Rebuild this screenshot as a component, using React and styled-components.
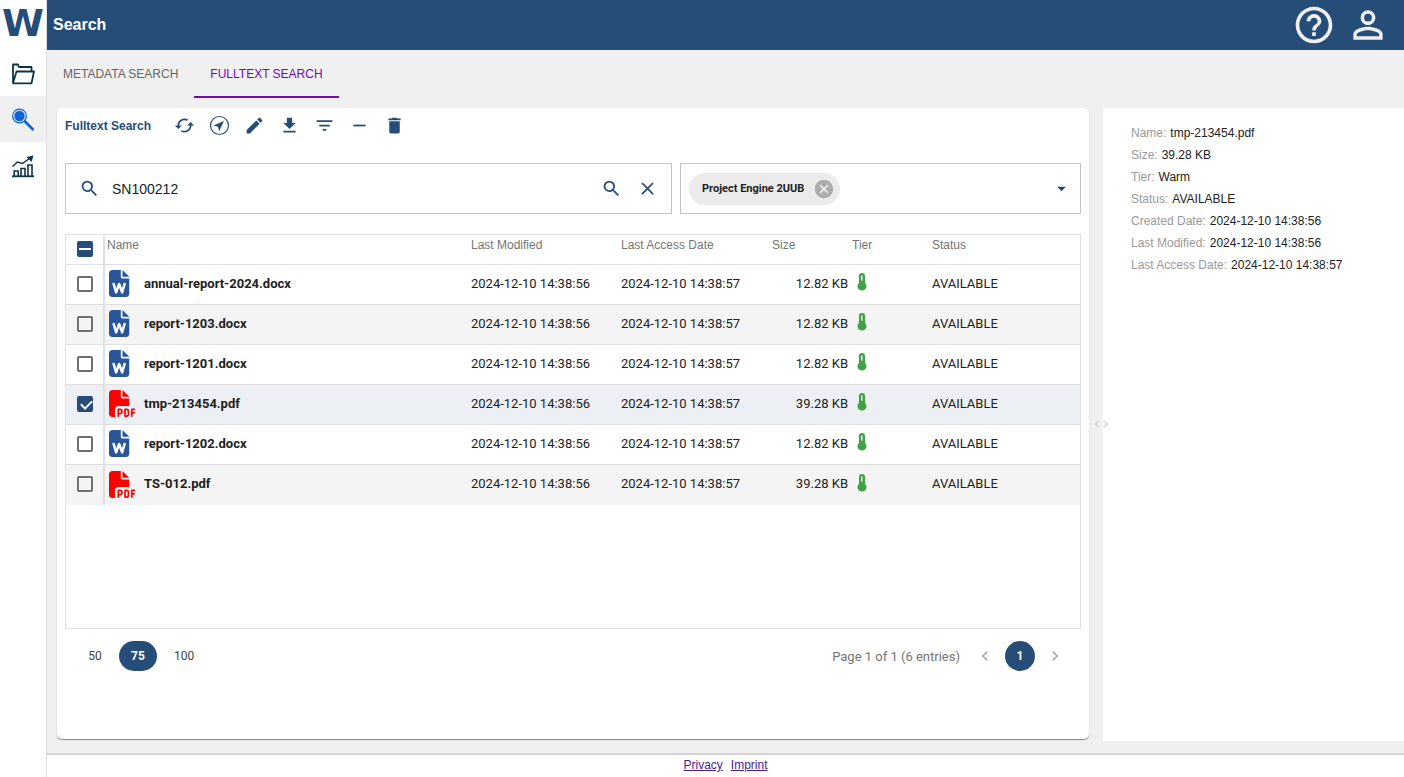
import React, { useState } from "react";
import styled, { createGlobalStyle } from "styled-components";
import {
  MdArrowDropDown,
  MdCached,
  MdCancel,
  MdChevronLeft,
  MdChevronRight,
  MdClose,
  MdDelete,
  MdEdit,
  MdFilterList,
  MdGetApp,
  MdHelpOutline,
  MdPersonOutline,
  MdRemove,
  MdSearch,
} from "react-icons/md";
import { FaFilePdf, FaFileWord } from "react-icons/fa6";

const colors = {
  primary: "#264d77",
  accent: "#7209b7",
  page: "#f0f0f0",
  line: "#e0e0e0",
  field: "#c4c4c4",
  text: "#212121",
  muted: "#757575",
};

const sans = `"Liberation Sans", Arial, sans-serif`;
const roboto = `Roboto, "Liberation Sans", sans-serif`;

const GlobalStyle = createGlobalStyle`
  * {
    box-sizing: border-box;
  }

  body {
    margin: 0;
    background: ${colors.page};
    color: ${colors.text};
    font-family: ${sans};
    font-size: 12px;
  }

  button {
    border: 0;
    padding: 0;
    background: none;
    font: inherit;
    color: inherit;
    cursor: pointer;
  }
`;

const Layout = styled.div`
  display: flex;
  min-height: 100vh;
`;

const Sidebar = styled.nav`
  flex: none;
  width: 47px;
  background: white;
  border-right: 1px solid ${colors.line};
`;

const Logo = styled.div`
  height: 50px;
  line-height: 46px;
  display: flex;
  justify-content: center;
  font-family: "DejaVu Sans", sans-serif;
  font-size: 38px;
  font-weight: bold;
  color: ${colors.primary};
`;

const SidebarLink = styled.a`
  display: flex;
  align-items: center;
  justify-content: center;
  height: 46px;
  padding-top: 2px;
  background: ${(props) => (props.$active ? colors.page : "transparent")};
`;

const Main = styled.div`
  flex: 1;
  min-width: 0;
  display: flex;
  flex-direction: column;
`;

const Header = styled.header`
  display: flex;
  align-items: center;
  justify-content: space-between;
  height: 50px;
  padding: 0 14px 0 6px;
  background: ${colors.primary};
  color: ${colors.page};
`;

const Title = styled.h1`
  margin: 0;
  font-size: 16px;
  line-height: 20px;
  color: white;
`;

const HeaderActions = styled.div`
  display: flex;
  gap: 10px;
  font-size: 44px;

  button {
    display: flex;
  }
`;

const Tabs = styled.div`
  display: flex;
  height: 48px;
`;

const Tab = styled.button`
  padding: 2px 16px 0;
  border-bottom: 2px solid
    ${(props) => (props.$active ? colors.accent : "transparent")};
  color: ${(props) => (props.$active ? colors.accent : "#666")};
`;

const Content = styled.main`
  flex: 1;
  display: flex;
  padding: 10px 0 12px 10px;
`;

const Card = styled.section`
  flex: 1;
  min-width: 0;
  display: flex;
  flex-direction: column;
  padding: 0 8px 56px;
  margin-bottom: 2px;
  background: white;
  border-radius: 5px;
  box-shadow: 0 1px 1px rgba(0, 0, 0, 0.45);
`;

const Toolbar = styled.div`
  display: flex;
  align-items: center;
  height: 35px;
  color: ${colors.primary};
`;

const ToolbarTitle = styled.h2`
  margin: 0 16px 0 0;
  font-size: 12px;
`;

const ToolButton = styled.button`
  display: flex;
  align-items: center;
  justify-content: center;
  width: 35px;
  height: 35px;
  font-size: 21px;
`;

const Filters = styled.div`
  display: grid;
  grid-template-columns: minmax(0, 1fr) 401px;
  gap: 8px;
  margin: 20px 0;
`;

const Field = styled.div`
  display: flex;
  align-items: center;
  height: 51px;
  border: 1px solid ${colors.field};
  color: ${colors.primary};
  font-size: 21px;
`;

const SearchField = styled(Field)`
  padding: 0 6px 0 13px;
`;

const SearchInput = styled.input`
  flex: 1;
  min-width: 0;
  margin-left: 12px;
  padding: 0;
  border: 0;
  outline: 0;
  font-family: ${sans};
  font-size: 14px;
  color: ${colors.text};
`;

const FieldButton = styled.button`
  display: flex;
  align-items: center;
  justify-content: center;
  width: 36px;
  height: 36px;
`;

const ProjectField = styled(Field)`
  padding: 0 1px 0 8px;
`;

const Chip = styled.span`
  display: flex;
  align-items: center;
  gap: 9px;
  height: 32px;
  padding: 0 5px 0 13px;
  border-radius: 16px;
  background: #ebebeb;
  color: ${colors.text};
  font-family: ${roboto};
  font-size: 11px;
  font-weight: bold;

  button {
    display: flex;
    font-size: 22px;
    color: #acacac;
  }
`;

const TableBox = styled.div`
  flex: 1;
  border: 1px solid ${colors.line};
`;

const Table = styled.table`
  width: 100%;
  table-layout: fixed;
  border-collapse: separate;
  border-spacing: 0;
`;

const Col = styled.col`
  width: ${(props) => props.$width};
`;

const HeadCell = styled.th`
  height: 30px;
  padding: 3px 2px 0;
  border-bottom: 1px solid ${colors.line};
  font-size: 12px;
  line-height: 14px;
  font-weight: normal;
  text-align: left;
  vertical-align: top;
  color: ${colors.muted};
`;

const Row = styled.tr`
  background: ${(props) =>
    props.$selected ? "#ecf0f4" : props.$striped ? "#f4f4f4" : "white"};
`;

const Cell = styled.td`
  height: 40px;
  padding: 0 2px 2px;
  font-family: ${roboto};
  font-size: 13px;
  line-height: 16px;
  text-align: ${(props) => props.$align || "left"};
  white-space: nowrap;

  tr:not(:last-child) > & {
    border-bottom: 1px solid ${colors.line};
  }
`;

const CheckHead = styled(HeadCell)`
  padding: 6px 0 0 11px;
  border-right: 2px solid ${colors.line};
`;

const CheckCell = styled(Cell)`
  padding: 0 0 2px 11px;
  border-right: 2px solid ${colors.line};
`;

const Checkbox = styled.input`
  appearance: none;
  display: block;
  position: relative;
  width: 16px;
  height: 16px;
  margin: 0;
  border: 2px solid #707070;
  border-radius: 2px;

  &:checked,
  &[data-partial="true"] {
    background: ${colors.primary};
    border-color: ${colors.primary};
  }

  &:checked::after {
    content: "";
    position: absolute;
    left: 4px;
    top: 0;
    width: 5px;
    height: 9px;
    border: solid white;
    border-width: 0 2px 2px 0;
    transform: rotate(45deg);
  }

  &[data-partial="true"]::after {
    content: "";
    position: absolute;
    left: 0;
    top: 5px;
    width: 12px;
    height: 2px;
    background: white;
  }
`;

const FileName = styled.div`
  display: flex;
  align-items: center;
  gap: 8px;
  padding-left: 2px;
  font-weight: bold;
`;

const FileIcon = styled.span`
  display: flex;
  width: 27px;
  font-size: 27px;
  color: ${(props) => (props.$pdf ? "#ff0000" : "#2a5699")};
`;

const TierIcon = styled.svg`
  display: block;
  margin: 0 0 3px 1px;
`;

const Pager = styled.div`
  display: flex;
  align-items: center;
  justify-content: space-between;
  height: 54px;
  padding: 0 11px;
  font-family: ${roboto};
  font-size: 13px;
`;

const PagerGroup = styled.div`
  display: flex;
  align-items: center;
  gap: 5px;
`;

const PageSummary = styled.span`
  margin-right: 5px;
  color: ${colors.muted};
`;

const PagerButton = styled.button`
  display: flex;
  align-items: center;
  justify-content: center;
  min-width: ${(props) => (props.$wide ? "38px" : "30px")};
  height: 30px;
  padding: ${(props) => (props.$wide ? "0 12px" : "0")};
  border-radius: 15px;
  background: ${(props) => (props.$active ? colors.primary : "transparent")};
  color: ${(props) => (props.$active ? "white" : "#424242")};
  font-size: 12px;
  font-weight: ${(props) => (props.$active ? "bold" : "normal")};

  svg {
    font-size: 20px;
    color: #aaa;
  }
`;

const Splitter = styled.div`
  flex: none;
  position: relative;
  width: 14px;
`;

const SplitterHandle = styled.button`
  position: absolute;
  top: 50%;
  left: 1px;
  display: flex;
  margin-top: -8px;
  font-size: 14px;
  color: #ccc;

  svg + svg {
    margin-left: -5px;
  }
`;

const Details = styled.aside`
  flex: none;
  width: 301px;
  padding: 14px 28px;
  background: white;
`;

const DetailRow = styled.div`
  line-height: 22px;
`;

const DetailLabel = styled.span`
  margin-right: 4px;
  color: #999;
`;

const Footer = styled.footer`
  display: flex;
  justify-content: center;
  gap: 8px;
  height: 24px;
  padding-top: 3px;
  border-top: 2px solid #d3d3d3;
  background: white;
  line-height: 14px;

  a {
    color: #4b1d8f;
  }
`;

const FolderIcon = () => (
  <svg width="24" height="24" viewBox="0 0 24 24" fill="none">
    <path
      d="M2 21V2.500h5l1 2.500h12.500V9M2 21L5.500 9.500H23L20.500 21.300H1.500"
      stroke="#0d3349"
      strokeWidth="1.800"
      strokeLinejoin="round"
    />
  </svg>
);

const LensIcon = () => (
  <svg width="24" height="24" viewBox="0 0 24 24" fill="none" stroke="#0b63d8">
    <circle cx="8.500" cy="8" r="6.800" strokeWidth="1.200" />
    <circle cx="8.500" cy="8" r="5.200" fill="#0b63d8" stroke="none" />
    <path d="M13.500 13L22.500 22" strokeWidth="2.500" />
  </svg>
);

const ChartIcon = () => (
  <svg width="24" height="24" viewBox="0 0 24 24" fill="none" stroke="#0d3349">
    <path d="M1 22.300h22" strokeWidth="1.800" />
    <path
      d="M3.200 22v-5h4v5M10 22v-7.500h4V22M17 22V11h4v11"
      strokeWidth="1.600"
    />
    <path d="M1.500 12.500L6.500 8l5 1.500L19 4" strokeWidth="1.500" />
    <path d="M15.500 3l7-1.500L20.500 8z" fill="#0d3349" stroke="none" />
  </svg>
);

const LocateIcon = () => (
  <svg width="21" height="21" viewBox="0 0 21 21">
    <circle
      cx="10.500"
      cy="10.500"
      r="9"
      fill="none"
      stroke="currentColor"
      strokeWidth="1.200"
    />
    <path d="M15 6L4.500 10.500l4.500 1.300 1.200 4.500z" fill="currentColor" />
  </svg>
);

const Thermometer = () => (
  <TierIcon width="18" height="18" viewBox="0 0 18 18" role="img" aria-label="Warm">
    <path
      d="M6 2.800a3 2.800 0 0 1 6 0v6.900a4.500 4.500 0 1 1-6 0z"
      fill="#43a047"
    />
    <path d="M9 2.500v5" stroke="white" strokeWidth="1.600" />
    <path d="M9 4h1M9 6h1" stroke="#43a047" strokeWidth="0.800" />
  </TierIcon>
);

const files = [
  { name: "annual-report-2024.docx", size: "12.82 KB" },
  { name: "report-1203.docx", size: "12.82 KB" },
  { name: "report-1201.docx", size: "12.82 KB" },
  { name: "tmp-213454.pdf", size: "39.28 KB" },
  { name: "report-1202.docx", size: "12.82 KB" },
  { name: "TS-012.pdf", size: "39.28 KB" },
];

const details = [
  ["Name:", "tmp-213454.pdf"],
  ["Size:", "39.28 KB"],
  ["Tier:", "Warm"],
  ["Status:", "AVAILABLE"],
  ["Created Date:", "2024-12-10 14:38:56"],
  ["Last Modified:", "2024-12-10 14:38:56"],
  ["Last Access Date:", "2024-12-10 14:38:57"],
];

const tools = [
  { label: "Refresh", icon: <MdCached /> },
  { label: "Locate", icon: <LocateIcon /> },
  { label: "Edit", icon: <MdEdit /> },
  { label: "Download", icon: <MdGetApp /> },
  { label: "Filter", icon: <MdFilterList /> },
  { label: "Remove", icon: <MdRemove /> },
  { label: "Delete", icon: <MdDelete /> },
];

const headings = [
  "Name",
  "Last Modified",
  "Last Access Date",
  "Size",
  "Tier",
  "Status",
];

const FileTable = () => {
  const [selected, setSelected] = useState(["tmp-213454.pdf"]);

  const toggle = (name) => {
    setSelected(
      selected.includes(name)
        ? selected.filter((item) => item !== name)
        : [...selected, name]
    );
  };

  const all = selected.length === files.length;

  return (
    <Table>
      <colgroup>
        <Col $width="39px" />
        <Col />
        <Col $width="150px" />
        <Col $width="151px" />
        <Col $width="80px" />
        <Col $width="80px" />
        <Col $width="150px" />
      </colgroup>
      <thead>
        <tr>
          <CheckHead>
            <Checkbox
              type="checkbox"
              aria-label="Select all"
              checked={all}
              data-partial={selected.length > 0 && !all}
              onChange={() => setSelected(all ? [] : files.map((f) => f.name))}
            />
          </CheckHead>
          {headings.map((heading) => (
            <HeadCell key={heading}>{heading}</HeadCell>
          ))}
        </tr>
      </thead>
      <tbody>
        {files.map((file, index) => {
          const pdf = file.name.endsWith(".pdf");
          return (
            <Row
              key={file.name}
              $selected={selected.includes(file.name)}
              $striped={index % 2 === 1}
            >
              <CheckCell>
                <Checkbox
                  type="checkbox"
                  aria-label={file.name}
                  checked={selected.includes(file.name)}
                  onChange={() => toggle(file.name)}
                />
              </CheckCell>
              <Cell>
                <FileName>
                  <FileIcon $pdf={pdf}>
                    {pdf ? (
                      <FaFilePdf />
                    ) : (
                      <FaFileWord preserveAspectRatio="xMinYMid meet" />
                    )}
                  </FileIcon>
                  {file.name}
                </FileName>
              </Cell>
              <Cell>2024-12-10 14:38:56</Cell>
              <Cell>2024-12-10 14:38:57</Cell>
              <Cell $align="right">{file.size}</Cell>
              <Cell>
                <Thermometer />
              </Cell>
              <Cell>AVAILABLE</Cell>
            </Row>
          );
        })}
      </tbody>
    </Table>
  );
};

const App = () => {
  const [query, setQuery] = useState("SN100212");

  return (
    <Layout>
      <GlobalStyle />
      <Sidebar>
        <Logo>W</Logo>
        <SidebarLink href="#files" aria-label="Files">
          <FolderIcon />
        </SidebarLink>
        <SidebarLink href="#search" aria-label="Search" $active>
          <LensIcon />
        </SidebarLink>
        <SidebarLink href="#statistics" aria-label="Statistics">
          <ChartIcon />
        </SidebarLink>
      </Sidebar>
      <Main>
        <Header>
          <Title>Search</Title>
          <HeaderActions>
            <button aria-label="Help">
              <MdHelpOutline />
            </button>
            <button aria-label="Account">
              <MdPersonOutline />
            </button>
          </HeaderActions>
        </Header>
        <Tabs role="tablist">
          <Tab role="tab">METADATA SEARCH</Tab>
          <Tab role="tab" aria-selected="true" $active>
            FULLTEXT SEARCH
          </Tab>
        </Tabs>
        <Content>
          <Card>
            <Toolbar>
              <ToolbarTitle>Fulltext Search</ToolbarTitle>
              {tools.map((tool) => (
                <ToolButton key={tool.label} aria-label={tool.label}>
                  {tool.icon}
                </ToolButton>
              ))}
            </Toolbar>
            <Filters>
              <SearchField>
                <MdSearch />
                <SearchInput
                  aria-label="Search text"
                  value={query}
                  onChange={(e) => setQuery(e.target.value)}
                />
                <FieldButton aria-label="Search">
                  <MdSearch />
                </FieldButton>
                <FieldButton aria-label="Clear" onClick={() => setQuery("")}>
                  <MdClose />
                </FieldButton>
              </SearchField>
              <ProjectField>
                <Chip>
                  Project Engine 2UUB
                  <button aria-label="Remove project">
                    <MdCancel />
                  </button>
                </Chip>
                <SearchInput role="combobox" aria-label="Project" />
                <FieldButton aria-label="Open projects">
                  <MdArrowDropDown />
                </FieldButton>
              </ProjectField>
            </Filters>
            <TableBox>
              <FileTable />
            </TableBox>
            <Pager>
              <PagerGroup>
                <PagerButton $wide>50</PagerButton>
                <PagerButton $wide $active>
                  75
                </PagerButton>
                <PagerButton $wide>100</PagerButton>
              </PagerGroup>
              <PagerGroup>
                <PageSummary>Page 1 of 1 (6 entries)</PageSummary>
                <PagerButton aria-label="Previous page">
                  <MdChevronLeft />
                </PagerButton>
                <PagerButton $active>1</PagerButton>
                <PagerButton aria-label="Next page">
                  <MdChevronRight />
                </PagerButton>
              </PagerGroup>
            </Pager>
          </Card>
          <Splitter>
            <SplitterHandle aria-label="Resize panels">
              <MdChevronLeft />
              <MdChevronRight />
            </SplitterHandle>
          </Splitter>
          <Details>
            {details.map(([label, value]) => (
              <DetailRow key={label}>
                <DetailLabel>{label}</DetailLabel>
                {value}
              </DetailRow>
            ))}
          </Details>
        </Content>
        <Footer>
          <a href="#privacy">Privacy</a>
          <a href="#imprint">Imprint</a>
        </Footer>
      </Main>
    </Layout>
  );
};

export default App;
